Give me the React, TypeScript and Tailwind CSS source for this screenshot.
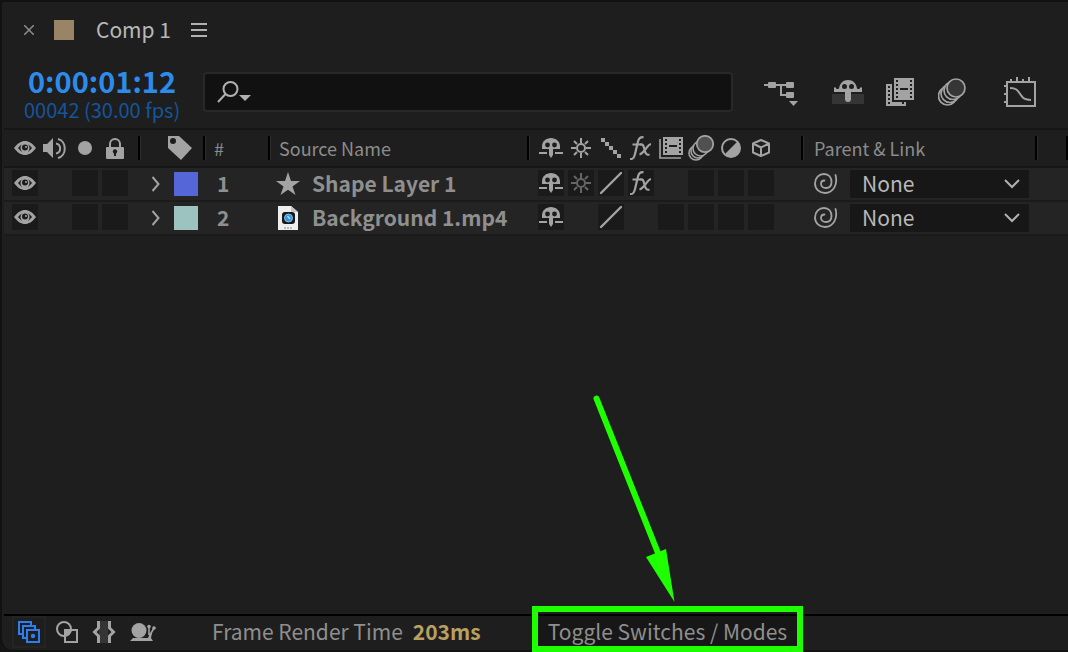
import type { ReactNode } from 'react'

const FG = '#a3a3a3'

function Icon({ w, h, label, children }: { w: number; h: number; label?: string; children: ReactNode }) {
  return (
    <svg
      width={w}
      height={h}
      viewBox={`0 0 ${w} ${h}`}
      fill="none"
      className="block shrink-0"
      role={label ? 'img' : undefined}
      aria-label={label}
      aria-hidden={label ? undefined : true}
    >
      {children}
    </svg>
  )
}

function EyeIcon({ label }: { label?: string }) {
  return (
    <Icon w={22} h={14} label={label}>
      <path d="M0 7C4 2 7 0 11 0s7 2 11 7c-4 5-7 7-11 7S4 12 0 7z" fill={FG} />
      <path d="M4 7c1.500-1.900 2.700-3 4-3.800a5.500 5.500 0 0 0 0 7.600C6.700 10 5.500 8.900 4 7zM18 7c-1.500-1.900-2.700-3-4-3.800a5.500 5.500 0 0 1 0 7.600c1.300-.8 2.500-1.900 4-3.800z" fill="#1c1c1c" />
      <circle cx="11" cy="6.500" r="3" fill="#1c1c1c" />
      <circle cx="12" cy="6" r="1" fill={FG} />
    </Icon>
  )
}

function SpeakerIcon() {
  return (
    <Icon w={24} h={22} label="Audio">
      <path d="M0 7h4l6-6v20l-6-6H0z" fill={FG} />
      <path d="M13 6.500c5.500 1 5.500 9 0 10M15 2c9 2 9 17 0 19" stroke={FG} strokeWidth="2" />
    </Icon>
  )
}

function SoloIcon() {
  return (
    <Icon w={14} h={14} label="Solo">
      <circle cx="7" cy="7" r="7" fill={FG} />
    </Icon>
  )
}

function LockIcon() {
  return (
    <Icon w={18} h={21} label="Lock">
      <path d="M4 10V6a5 5 0 0 1 10 0v4" stroke={FG} strokeWidth="2" />
      <rect y="9" width="18" height="12" rx="1" fill={FG} />
      <circle cx="9" cy="13.500" r="2.200" fill="#1c1c1c" />
      <path d="M8 14h2v4H8z" fill="#1c1c1c" />
    </Icon>
  )
}

function TagIcon() {
  return (
    <Icon w={25} h={24} label="Label">
      <path d="M0 0h11l13 12-11 12L0 12z" fill={FG} />
      <circle cx="5" cy="5" r="3" fill="#1c1c1c" />
    </Icon>
  )
}

function ShyIcon() {
  return (
    <Icon w={24} h={20}>
      <path d="M3 11V8.500C3 3.500 7 0 12 0s9 3.500 9 8.500V11z" fill={FG} />
      <circle cx="8.500" cy="7" r="2.400" fill="#1c1c1c" />
      <circle cx="15.500" cy="7" r="2.400" fill="#1c1c1c" />
      <path d="M10 10h4v7l-2 3-2-3z" fill={FG} />
      <path d="M0 14h8v2H0zM16 14h8v2h-8z" fill={FG} />
    </Icon>
  )
}

function SunIcon({ color = FG }: { color?: string }) {
  return (
    <Icon w={20} h={20}>
      <circle cx="10" cy="10" r="4" stroke={color} strokeWidth="2" />
      <path d="M10 0v5M10 15v5M0 10h5M15 10h5M3 3l3 3M14 14l3 3M3 17l3-3M14 6l3-3" stroke={color} strokeWidth="2" />
    </Icon>
  )
}

function QualityIcon() {
  return (
    <Icon w={20} h={20}>
      <path d="M0 0h4v4H0zM4 4h4v4H4zM8 8h4v4H8zM12 12h4v4h-4zM16 16h4v4h-4z" fill={FG} />
    </Icon>
  )
}

function SlashIcon() {
  return (
    <Icon w={24} h={24}>
      <path d="M2 22L22 2" stroke={FG} strokeWidth="2.400" strokeLinecap="round" />
    </Icon>
  )
}

function FxIcon() {
  return (
    <Icon w={22} h={24}>
      <path d="M0 23c3 .5 4-1 5-5L8 5.500C9 2 10.500.8 13.500 1.300M2.500 8.500H11" stroke={FG} strokeWidth="2.200" />
      <path d="M10 8.500c3-.7 3.500 1 4.500 5s2 6 5 5M21 8c-2 .3-3 1.800-5 4.500s-4 5.500-6.500 6" stroke={FG} strokeWidth="2.200" />
    </Icon>
  )
}

function FrameBlendIcon() {
  return (
    <Icon w={24} h={22}>
      <path d="M1 2v19h21" stroke={FG} strokeWidth="1.600" />
      <path d="M4 0h20v18H4z" fill={FG} />
      <path d="M6 2h2v2H6zM6 6h2v2H6zM6 10h2v2H6zM6 14h2v2H6zM20 2h2v2h-2zM20 6h2v2h-2zM20 10h2v2h-2zM20 14h2v2h-2zM10 8h8v2h-8z" fill="#1c1c1c" />
    </Icon>
  )
}

function MotionBlurIcon() {
  return (
    <Icon w={26} h={26}>
      <circle cx="8" cy="18" r="7" stroke={FG} strokeWidth="1.600" />
      <circle cx="10" cy="16" r="7" fill="#1e1e1e" stroke={FG} strokeWidth="1.600" />
      <circle cx="12.500" cy="13.500" r="7.500" fill="#1e1e1e" stroke={FG} strokeWidth="1.600" />
      <circle cx="17" cy="9" r="8.200" fill="#505050" stroke={FG} strokeWidth="1.700" />
    </Icon>
  )
}

function AdjustmentIcon() {
  return (
    <Icon w={20} h={20}>
      <circle cx="10" cy="10" r="9" stroke={FG} strokeWidth="2" />
      <path d="M16.700 3.300A9.500 9.500 0 0 1 3.300 16.700z" fill={FG} />
    </Icon>
  )
}

function CubeIcon() {
  return (
    <Icon w={18} h={18}>
      <path d="M9 1l8 3.500v9L9 17l-8-3.500v-9zM1 4.500L9 8.500l8-4M9 8.500V17" stroke={FG} strokeWidth="2" strokeLinejoin="round" />
    </Icon>
  )
}

function StarIcon() {
  return (
    <Icon w={24} h={24}>
      <path d="M12 0l3 9h9l-7.500 5.500L19.500 23 12 17.700 4.500 23l3-8.500L0 9h9z" fill={FG} />
    </Icon>
  )
}

function MovieFileIcon() {
  return (
    <Icon w={24} h={24}>
      <path d="M2 0h13l7 6v18H2z" fill="#eeeeee" />
      <path d="M15 0l7 6h-7z" fill="#c4c4c4" />
      <rect x="6" y="6" width="13" height="12" rx="3" fill="#15191d" />
      <circle cx="12.500" cy="12" r="4" fill="#2795e8" stroke="#a5b3bd" strokeWidth="1" />
      <path d="M11.500 10l2.500 3" stroke="#9be0ff" strokeWidth="1.500" />
      <path d="M8 22h8" stroke="#8a8a8a" strokeWidth="1" strokeDasharray="2 1" />
    </Icon>
  )
}

function PickWhipIcon() {
  return (
    <Icon w={24} h={22}>
      <path
        d="M21.500 2C24 11 19.500 20 11 20 5.500 20 1 16 1 10.500S5 1 10 1s7.500 3.500 7.500 8-2.500 6-5.500 6-5-2-5-4 1.500-3.500 3.500-3.500"
        stroke={FG}
        strokeWidth="1.800"
        strokeLinecap="round"
      />
    </Icon>
  )
}

function FlowchartIcon() {
  return (
    <Icon w={34} h={28}>
      <path d="M0 7h26M17 7v10h6" stroke={FG} strokeWidth="2" />
      <rect x="4" y="4" width="8" height="6" rx="1" fill={FG} />
      <rect x="22" y="4" width="8" height="6" rx="1" fill={FG} />
      <rect x="22" y="14" width="8" height="6" rx="1" fill={FG} />
      <path d="M25 23h9l-4.500 5z" fill={FG} />
    </Icon>
  )
}

function HideShyIcon() {
  return (
    <Icon w={32} h={24}>
      <path d="M0 14h32v10H0z" fill="#353535" />
      <path d="M2 12V7.500h2c0 1.500 1 2 3 1C8 3 11 0 16 0s8 3 9 8.500c2 1 3 .5 3-1h2V12z" fill={FG} />
      <circle cx="12.500" cy="6.500" r="2.500" fill="#1e1e1e" />
      <circle cx="19.500" cy="6.500" r="2.500" fill="#1e1e1e" />
      <path d="M13 10h6v9a3 3 0 0 1-6 0z" fill={FG} />
    </Icon>
  )
}

function FrameBlendAllIcon() {
  return (
    <Icon w={28} h={28}>
      <path d="M0 6h6v18h14v4H0z" fill={FG} />
      <path d="M2 8h2v2H2zM2 12h2v2H2zM2 16h2v2H2zM2 20h2v2H2zM2 24h2v2H2zM16 24h2v2h-2z" fill="#1e1e1e" />
      <path d="M8 0h20v22H8z" fill={FG} />
      <path d="M10 2h2v2h-2zM10 6h2v2h-2zM10 10h2v2h-2zM10 14h2v2h-2zM10 18h2v2h-2zM24 2h2v2h-2zM24 6h2v2h-2zM24 10h2v2h-2zM24 14h2v2h-2zM24 18h2v2h-2zM14 10h8v2h-8z" fill="#1e1e1e" />
    </Icon>
  )
}

function MotionBlurAllIcon() {
  return (
    <Icon w={28} h={28}>
      <circle cx="9.500" cy="18" r="9" stroke={FG} strokeWidth="1.700" />
      <circle cx="12" cy="15.500" r="9" fill="#1e1e1e" stroke={FG} strokeWidth="1.700" />
      <circle cx="15" cy="12.500" r="9" fill="#1e1e1e" stroke={FG} strokeWidth="1.700" />
      <circle cx="18" cy="10" r="9" fill="#363636" stroke={FG} strokeWidth="1.700" />
    </Icon>
  )
}

function GraphEditorIcon() {
  return (
    <Icon w={32} h={30}>
      <path d="M3 5h28v24H3z" stroke={FG} strokeWidth="2" />
      <path d="M7 2v3M13 0v5M19 2v3M25 0v5M0 9h3M0 17h3M0 25h3" stroke={FG} strokeWidth="2" />
      <path d="M6 11c7 0 8 3 10.500 6.500S20 23 27 23" stroke={FG} strokeWidth="2" />
    </Icon>
  )
}

function LayersIcon() {
  return (
    <Icon w={22} h={22}>
      <path d="M4 13H1V1h12v3" stroke="#2d7ff0" strokeWidth="2" />
      <path d="M8 17H5V5h12v3" stroke="#2d7ff0" strokeWidth="2" />
      <path d="M9 9h12v12H9z" stroke="#2d7ff0" strokeWidth="2" />
      <circle cx="15" cy="15" r="2.200" fill="#2d7ff0" />
    </Icon>
  )
}

function TransferIcon() {
  return (
    <Icon w={22} h={22}>
      <path d="M9 9h7a8 8 0 0 1-7 6z" fill={FG} />
      <circle cx="8" cy="8" r="7" stroke={FG} strokeWidth="2" />
      <path d="M9 9h12v12H9z" stroke={FG} strokeWidth="2" />
    </Icon>
  )
}

function InOutIcon() {
  return (
    <Icon w={24} h={22}>
      <path d="M7 0h9v22H7z" fill="#353535" />
      <path d="M6.500 0v7l-4 4 4 4v7M17.500 0v7l4 4-4 4v7" stroke={FG} strokeWidth="3" />
    </Icon>
  )
}

function SnailIcon() {
  return (
    <Icon w={26} h={18}>
      <path d="M0 18l3-3h15l2-5h2l-1 5 2 3z" fill={FG} />
      <circle cx="9" cy="7.500" r="7.500" fill={FG} />
      <path d="M19 12V4M20 12l4-7" stroke={FG} strokeWidth="1.600" />
      <circle cx="19" cy="3.500" r="1.800" fill={FG} />
      <circle cx="24" cy="5" r="1.800" fill={FG} />
    </Icon>
  )
}

function SearchIcon() {
  return (
    <Icon w={34} h={22}>
      <circle cx="13.500" cy="8" r="7" stroke="#b0b0b0" strokeWidth="2" />
      <path d="M8.500 13L1 21" stroke="#b0b0b0" strokeWidth="2" />
      <path d="M22 14h12l-6 6z" fill="#b0b0b0" />
    </Icon>
  )
}

const switchIcons = [
  { name: 'Shy', icon: <ShyIcon /> },
  { name: 'Collapse Transformations', icon: <SunIcon /> },
  { name: 'Quality', icon: <QualityIcon /> },
  { name: 'Effect', icon: <FxIcon /> },
  { name: 'Frame Blend', icon: <FrameBlendIcon /> },
  { name: 'Motion Blur', icon: <MotionBlurIcon /> },
  { name: 'Adjustment Layer', icon: <AdjustmentIcon /> },
  { name: '3D Layer', icon: <CubeIcon /> },
]

// null is a switch the layer does not have, '' one that is off
const layers = [
  {
    id: 1,
    name: 'Shape Layer 1',
    icon: <StarIcon />,
    color: 'bg-[#5566d9]',
    switches: [<ShyIcon />, <SunIcon color="#666666" />, <SlashIcon />, <FxIcon />, null, '', '', ''],
  },
  {
    id: 2,
    name: 'Background 1.mp4',
    icon: <MovieFileIcon />,
    color: 'bg-[#9cc3bf]',
    switches: [<ShyIcon />, null, <SlashIcon />, null, '', '', '', ''],
  },
]

const slot = 'flex size-[26px] shrink-0 items-center justify-center'
const divider = 'flex h-6 items-center border-r-2 border-black shadow-[1px_0_0_#2c2c2c]'

export default function App() {
  return (
    <div className="flex h-screen min-h-80 flex-col overflow-hidden bg-[#171514] font-['Noto_Sans_CJK_SC','Noto_Sans',sans-serif] text-[#8f8f8f]">
      <div className="mb-px flex flex-1 flex-col rounded-bl-xl border-t-2 border-b border-l-2 border-[#121212] bg-[#1e1e1e] pl-0.5">
        <div className="flex h-14 items-center pl-5">
          <button aria-label="Close" className="mr-5">
            <Icon w={10} h={10}>
              <path d="M0 0l10 10M10 0L0 10" stroke="#8c8c8c" strokeWidth="1.500" />
            </Icon>
          </button>
          <span className="mr-5 size-5 bg-[#998566]" />
          <h1 className="mr-5 pb-0.5 pl-0.5 text-[21px] leading-8 text-[#b9b9b9]">Comp 1</h1>
          <button aria-label="Panel menu">
            <Icon w={16} h={14}>
              <path d="M0 1h16M0 7h16M0 13h16" stroke="#b0b0b0" strokeWidth="2" />
            </Icon>
          </button>
        </div>

        <div className="flex h-[70px] items-center pr-8 pb-0.5 pl-5">
          <div className="w-[179px]">
            <div className="pl-1 text-[29px] leading-9 font-bold text-[#2d8ceb]">0:00:01:12</div>
            <div className="text-[20px] leading-6 text-[#15559b]">00042 (30.00 fps)</div>
          </div>
          <label className="mr-[31px] flex h-10 flex-1 items-center rounded border-2 border-[#282828] bg-[#111111] pl-3">
            <SearchIcon />
            <input type="text" aria-label="Search layers" className="min-w-0 flex-1 bg-transparent px-2 text-[20px] outline-none" />
          </label>
          <div className="flex items-center">
            <button aria-label="Mini-Flowchart" className="mr-[34px]"><FlowchartIcon /></button>
            <button aria-label="Hide shy layers" className="mr-[22px]"><HideShyIcon /></button>
            <button aria-label="Frame blending" className="mr-6"><FrameBlendAllIcon /></button>
            <button aria-label="Motion blur" className="mr-[38px]"><MotionBlurAllIcon /></button>
            <button aria-label="Graph Editor"><GraphEditorIcon /></button>
          </div>
        </div>

        <table className="w-full table-fixed border-collapse text-left">
          <colgroup>
            <col className="w-[136px]" />
            <col className="w-[65px]" />
            <col className="w-[65px]" />
            <col />
            <col className="w-[274px]" />
            <col className="w-[234px]" />
            <col className="w-[31px]" />
          </colgroup>
          <thead>
            <tr className="h-[38px] border-y-2 border-[#161616] text-[18px] leading-6 text-[#8c8c8c]">
              <th className="p-0 font-normal">
                <div className={`${divider} gap-1 pl-2`}>
                  <span className={slot}><EyeIcon label="Video" /></span>
                  <span className={slot}><SpeakerIcon /></span>
                  <span className={slot}><SoloIcon /></span>
                  <span className={slot}><LockIcon /></span>
                </div>
              </th>
              <th className="p-0 font-normal">
                <div className={`${divider} pl-7`}><TagIcon /></div>
              </th>
              <th className="p-0 font-normal"><div className={`${divider} pl-[9px]`}>#</div></th>
              <th className="p-0 font-normal"><div className={`${divider} pl-[9px]`}>Source Name</div></th>
              <th className="p-0 font-normal">
                <div className={`${divider} gap-1 pl-[9px]`}>
                  {switchIcons.map((s) => (
                    <span key={s.name} role="img" aria-label={s.name} className={slot}>{s.icon}</span>
                  ))}
                </div>
              </th>
              <th className="p-0 font-normal"><div className={`${divider} pl-[11px]`}>Parent &amp; Link</div></th>
              <th className="p-0"><div className={divider} /></th>
            </tr>
          </thead>
          <tbody>
            {layers.map((layer) => (
              <tr key={layer.id} className="h-[34px] border-b-2 border-[#1b1b1b] bg-[#242424] text-[21px] leading-7">
                <td className="p-0">
                  <div className="flex gap-1 pb-0.5 pl-2">
                    <button aria-label="Video" className={`${slot} mr-[30px] bg-[#1a1a1a]`}><EyeIcon /></button>
                    <button aria-label="Solo" className={`${slot} bg-[#1a1a1a]`} />
                    <button aria-label="Lock" className={`${slot} bg-[#1a1a1a]`} />
                  </div>
                </td>
                <td className="p-0">
                  <div className="flex items-center gap-3 pl-3">
                    <button aria-label="Expand">
                      <Icon w={10} h={16}>
                        <path d="M0.500 1l6 7-6 7" stroke={FG} strokeWidth="2" />
                      </Icon>
                    </button>
                    <span className={`size-6 ${layer.color}`} />
                  </div>
                </td>
                <td className="p-0 pb-0.5 pl-3 font-bold">{layer.id}</td>
                <td className="p-0 font-bold">
                  <div className="flex items-center gap-3 pl-1.5">
                    {layer.icon}
                    <span className="pb-0.5 whitespace-nowrap">{layer.name}</span>
                  </div>
                </td>
                <td className="p-0">
                  <div className="flex gap-1 pb-0.5 pl-[9px]">
                    {layer.switches.map((s, i) =>
                      s === null ? (
                        <span key={i} className={slot} />
                      ) : (
                        <button key={i} aria-label={switchIcons[i].name} className={`${slot} bg-[#1a1a1a]`}>{s}</button>
                      ),
                    )}
                  </div>
                </td>
                <td className="p-0">
                  <div className="flex items-center gap-3 pr-2 pl-[11px]">
                    <PickWhipIcon />
                    <div className="relative flex-1">
                      <select aria-label="Parent" className="block h-7 w-full appearance-none bg-[#171717] pb-0.5 pl-3 leading-6 text-[#b9b9b9]">
                        <option>None</option>
                      </select>
                      <div className="pointer-events-none absolute inset-y-0 right-2 flex items-center">
                        <Icon w={18} h={10}>
                          <path d="M2 1l7 7 7-7" stroke="#b0b0b0" strokeWidth="2" />
                        </Icon>
                      </div>
                    </div>
                  </div>
                </td>
                <td className="p-0" />
              </tr>
            ))}
          </tbody>
        </table>

        <div className="flex-1" />

        <footer className="flex h-9 items-start border-t-2 border-black text-[21px] leading-7">
          <div className="flex h-8 flex-1 items-center pl-2">
            <button aria-label="Layer switches" className="mr-2.5 flex h-8 w-[34px] items-center justify-center border-2 border-[#242424]">
              <LayersIcon />
            </button>
            <button aria-label="Transfer controls" className="mr-3.5"><TransferIcon /></button>
            <button aria-label="In and out" className="mr-3.5"><InOutIcon /></button>
            <button aria-label="Render time" className="mr-14"><SnailIcon /></button>
            <span className="mr-2.5 pb-0.5">Frame Render Time</span>
            <span className="pb-0.5 font-bold text-[#b9a060]">203ms</span>
          </div>
          <div className="w-[530px]">
            <div className="relative w-[259px]">
              <button className="block h-8 w-full bg-[#171717] pb-0.5 text-center">Toggle Switches / Modes</button>
              <div className="pointer-events-none absolute -inset-x-1.5 -top-2.5 -bottom-1 border-6 border-[#1eff00]">
                <svg width="100" height="216" viewBox="0 0 100 216" className="absolute bottom-full left-11 mb-1.5" aria-hidden="true">
                  <path d="M14.500 8.500L76 163" stroke="#1eff00" strokeWidth="6" strokeLinecap="round" />
                  <path d="M64 167l20-8 8.500 53z" fill="#1eff00" />
                </svg>
              </div>
            </div>
          </div>
        </footer>
      </div>
    </div>
  )
}
